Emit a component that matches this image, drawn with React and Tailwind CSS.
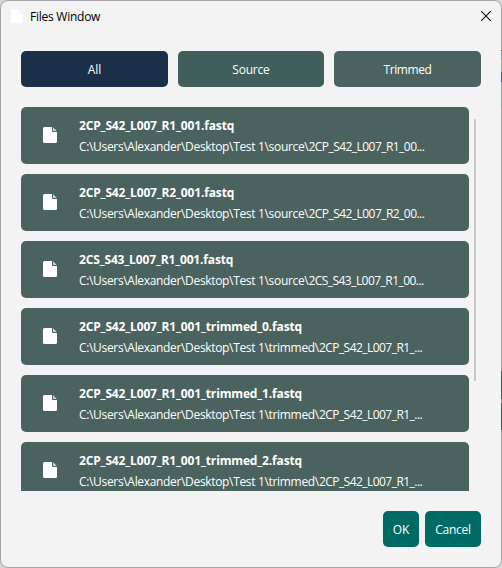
const DIR = 'C:\\Users\\Alexander\\Desktop\\Test 1\\';

const files = [
  { name: '2CP_S42_L007_R1_001.fastq', dir: DIR + 'source\\', base: '2CP_S42_L007_R1_00...' },
  { name: '2CP_S42_L007_R2_001.fastq', dir: DIR + 'source\\', base: '2CP_S42_L007_R2_00...' },
  { name: '2CS_S43_L007_R1_001.fastq', dir: DIR + 'source\\', base: '2CS_S43_L007_R1_00...' },
  { name: '2CP_S42_L007_R1_001_trimmed_0.fastq', dir: DIR + 'trimmed\\', base: '2CP_S42_L007_R1_...' },
  { name: '2CP_S42_L007_R1_001_trimmed_1.fastq', dir: DIR + 'trimmed\\', base: '2CP_S42_L007_R1_...' },
  { name: '2CP_S42_L007_R1_001_trimmed_2.fastq', dir: DIR + 'trimmed\\', base: '2CP_S42_L007_R1_...' },
];

function FileIcon({ className }) {
  return (
    <svg viewBox="0 0 14 16" className={className} fill="white">
      <path d="M1.5 0H9V4Q9 5 10 5H14V14.5Q14 16 12.5 16H1.5Q0 16 0 14.5V1.5Q0 0 1.5 0Z" />
      <path d="M10 0.2L13.8 4H10.8Q10 4 10 3.2Z" opacity="0.75" />
    </svg>
  );
}

function FileCard({ name, dir, base }) {
  return (
    <li className="flex h-[57px] w-[448px] shrink-0 items-center rounded-[5px] bg-[#4b635f] pl-[22px] text-white">
      <FileIcon className="mb-px h-4 w-3.5 shrink-0" />
      <div className="ml-[22px] whitespace-nowrap text-[12px] leading-[21px]">
        <div className="font-bold tracking-[-0.15px]">{name}</div>
        <div>
          <span className="tracking-[-0.33px]">{dir}</span>
          <span className="tracking-[-0.54px]">{base}</span>
        </div>
      </div>
    </li>
  );
}

/* Sliver of the application behind the dialog, visible past its right edge. */
function BackdropEdge() {
  return (
    <div className="absolute right-0 top-0 flex h-full w-px flex-col">
      <div className="mt-[50px] h-px bg-[#4a5560]" />
      <div className="h-[9px] bg-[#7d9c9f]" />
      <div className="mt-3 h-2.5 bg-[#55586c]" />
      <div className="h-[26px] bg-[#95a3a1]" />
      <div className="mt-[263px] h-7 bg-[#4b5755]" />
      <div className="mt-1 h-[27px] bg-[#4b5755]" />
    </div>
  );
}

export default function App() {
  return (
    <div className="relative h-[568px] w-[502px] overflow-hidden bg-[#d5d5d5] font-['Open_Sans','Noto_Sans',sans-serif] text-[12px]">
      <div className="flex h-[568px] w-[502px] flex-col rounded-lg border border-[#a5a5a5] bg-[#f3f3f3]">
        <header className="flex h-[30px] shrink-0 items-center pl-2.5 pr-2.5 text-black">
          <FileIcon className="h-3.5 w-3" />
          <span className="ml-[7px] pt-px tracking-[-0.25px]">Files Window</span>
          <svg viewBox="0 0 10 10" className="ml-auto h-2.5 w-2.5" stroke="#111" strokeWidth="1.1">
            <path d="M0 0L10 10M10 0L0 10" />
          </svg>
        </header>
        <nav className="mx-5 mt-5 flex h-9 shrink-0 gap-2.5 text-white">
          <button className="w-[147px] rounded-[5px] bg-[#1a3049] pt-0.5">All</button>
          <button className="w-[146px] rounded-[5px] bg-[#405e5b] pt-0.5 tracking-[-0.2px]">Source</button>
          <button className="w-[147px] rounded-[5px] bg-[#4b635f] pt-0.5 tracking-[-0.4px]">Trimmed</button>
        </nav>
        <main className="ml-5 mt-5 flex h-[384px] shrink-0 overflow-hidden">
          <ul className="flex flex-col gap-2.5">
            {files.map((f) => <FileCard key={f.name} {...f} />)}
          </ul>
          <div className="ml-[5px] mt-3 h-[262px] w-0.5 rounded-full bg-[#c8c8c8]" />
        </main>
        <footer className="mr-5 mt-5 flex h-9 shrink-0 justify-end gap-1.5 text-white">
          <button className="w-9 rounded-[5px] bg-[#006a64] pt-0.5 tracking-[-0.2px]">OK</button>
          <button className="w-14 rounded-[5px] bg-[#006a64] pt-0.5 tracking-[-0.3px]">Cancel</button>
        </footer>
      </div>
      <BackdropEdge />
    </div>
  );
}
